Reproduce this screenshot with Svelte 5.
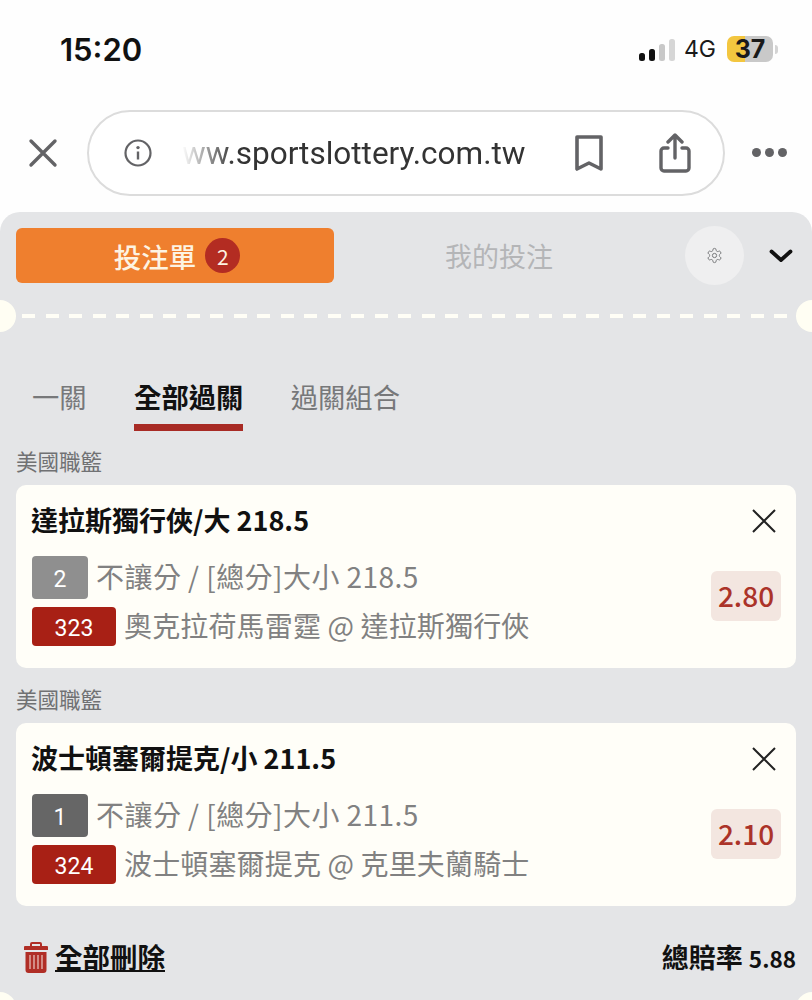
<script>
  const tickets = [
    {
      league: '美國職籃',
      title: '達拉斯獨行俠/大 218.5',
      round: '2',
      roundClass: 'light',
      market: '不讓分 / [總分]大小 218.5',
      code: '323',
      match: '奧克拉荷馬雷霆 @ 達拉斯獨行俠',
      odds: '2.80'
    },
    {
      league: '美國職籃',
      title: '波士頓塞爾提克/小 211.5',
      round: '1',
      roundClass: 'dark',
      market: '不讓分 / [總分]大小 211.5',
      code: '324',
      match: '波士頓塞爾提克 @ 克里夫蘭騎士',
      odds: '2.10'
    }
  ];
  const tabs = ['一關', '全部過關', '過關組合'];
  let activeTab = $state(1);
</script>

<div class="page">
  <div class="status">
    <span class="time">15:20</span>
    <div class="status-right">
      <div class="signal">
        <i class="b1"></i><i class="b2"></i><i class="b3"></i><i class="b4"></i>
      </div>
      <span class="net">4G</span>
      <div class="battery"><span>37</span></div>
      <div class="nub"></div>
    </div>
  </div>

  <div class="browser">
    <svg class="close" width="30" height="30" viewBox="0 0 30 30" fill="none" stroke="#636366" stroke-width="3.4" stroke-linecap="round">
      <path d="M3 3l24 24M27 3L3 27" />
    </svg>
    <div class="pill">
      <svg width="28" height="28" viewBox="0 0 28 28" fill="none">
        <circle cx="14" cy="14" r="12.5" stroke="#636366" stroke-width="2.2" />
        <circle cx="14" cy="8.6" r="1.7" fill="#636366" />
        <path d="M14 12.5v8" stroke="#636366" stroke-width="2.4" />
      </svg>
      <span class="url">ww.sportslottery.com.tw</span>
      <svg class="bookmark" width="30" height="38" viewBox="0 0 30 38" fill="none" stroke="#636366" stroke-width="3.6" stroke-linejoin="round">
        <path d="M3 3h24v32l-12-6-12 6z" />
      </svg>
      <svg class="share" width="32" height="40" viewBox="0 0 32 40" fill="none" stroke="#636366" stroke-width="3.4" stroke-linecap="round" stroke-linejoin="round">
        <path d="M9 15H5a3 3 0 0 0-3 3v17a3 3 0 0 0 3 3h22a3 3 0 0 0 3-3V18a3 3 0 0 0-3-3h-4" />
        <path d="M16 25V3M9 9l7-7 7 7" />
      </svg>
    </div>
    <div class="dots"><i></i><i></i><i></i></div>
  </div>

  <div class="panel">
    <div class="top-row">
      <button class="slip">投注單 <span class="count">2</span></button>
      <div class="mine">我的投注</div>
      <div class="gear">
        <svg width="17" height="17" viewBox="0 0 24 24" fill="none" stroke="#77787a" stroke-width="1.4">
          <path d="M12.22 2h-.44a2 2 0 0 0-2 2v.18a2 2 0 0 1-1 1.73l-.43.25a2 2 0 0 1-2 0l-.15-.08a2 2 0 0 0-2.73.73l-.22.38a2 2 0 0 0 .73 2.73l.15.1a2 2 0 0 1 1 1.72v.51a2 2 0 0 1-1 1.74l-.15.09a2 2 0 0 0-.73 2.73l.22.38a2 2 0 0 0 2.73.73l.15-.08a2 2 0 0 1 2 0l.43.25a2 2 0 0 1 1 1.73V20a2 2 0 0 0 2 2h.44a2 2 0 0 0 2-2v-.18a2 2 0 0 1 1-1.73l.43-.25a2 2 0 0 1 2 0l.15.08a2 2 0 0 0 2.73-.73l.22-.39a2 2 0 0 0-.73-2.73l-.15-.08a2 2 0 0 1-1-1.74v-.5a2 2 0 0 1 1-1.74l.15-.09a2 2 0 0 0 .73-2.73l-.22-.38a2 2 0 0 0-2.73-.73l-.15.08a2 2 0 0 1-2 0l-.43-.25a2 2 0 0 1-1-1.73V4a2 2 0 0 0-2-2z" />
          <circle cx="12" cy="12" r="3" />
        </svg>
      </div>
      <svg class="chevron" width="24" height="14" viewBox="0 0 24 14" fill="none" stroke="#111" stroke-width="3.8" stroke-linecap="round" stroke-linejoin="round">
        <path d="M2.5 2.5L12 11l9.5-8.5" />
      </svg>
    </div>

    <div class="divider">
      <span class="notch left"></span>
      <div class="dash"></div>
      <span class="notch right"></span>
    </div>

    <div class="tabs">
      {#each tabs as t, i}
        <div class="tab" class:active={activeTab === i}>{t}</div>
      {/each}
    </div>

    {#each tickets as t}
      <div class="league">{t.league}</div>
      <div class="card">
        <div class="card-head">
          <div class="title">{t.title}</div>
          <svg class="remove" width="26" height="26" viewBox="0 0 26 26" fill="none" stroke="#222" stroke-width="2">
            <path d="M2 2l22 22M24 2L2 24" />
          </svg>
        </div>
        <div class="card-body">
          <div class="lines">
            <div class="line first">
              <span class="tag round {t.roundClass}">{t.round}</span>
              <span class="txt">{t.market}</span>
            </div>
            <div class="line">
              <span class="tag code">{t.code}</span>
              <span class="txt">{t.match}</span>
            </div>
          </div>
          <div class="odds">{t.odds}</div>
        </div>
      </div>
    {/each}

    <div class="footer">
      <div class="del">
        <svg width="24" height="31" viewBox="0 0 24 31" fill="#b02e26">
          <path d="M8 0h8a2 2 0 0 1 2 2v2h5a1 1 0 0 1 1 1v3H0V5a1 1 0 0 1 1-1h5V2a2 2 0 0 1 2-2zm0 2v2h8V2z" fill-rule="evenodd" />
          <path d="M1.5 10h21v18a3 3 0 0 1-3 3h-15a3 3 0 0 1-3-3z" />
          <path d="M6 13v14M10 13v14M14 13v14M18 13v14" stroke="#eac9c2" stroke-width="1.2" />
        </svg>
        <span>全部刪除</span>
      </div>
      <div class="total">總賠率 <span>5.88</span></div>
    </div>

    <span class="notch bottom-left"></span>
    <span class="notch bottom-right"></span>
  </div>
</div>

<style>
  :global(body) {
    margin: 0;
    background: #fff;
    font-family: "Noto Sans CJK TC", "Noto Sans", sans-serif;
  }
  .page {
    width: 812px;
    height: 1000px;
    overflow: hidden;
    display: flex;
    flex-direction: column;
    background: #fefefe;
  }

  .status {
    height: 98px;
    flex: none;
    display: flex;
    align-items: center;
    justify-content: space-between;
    padding: 0 34px 0 60px;
    box-sizing: border-box;
  }
  .time {
    font-family: Inter, sans-serif;
    font-size: 31px;
    font-weight: 600;
    color: #111;
  }
  .status-right {
    display: flex;
    align-items: center;
  }
  .signal {
    display: flex;
    align-items: flex-end;
    gap: 4px;
    height: 24px;
    margin: 0 9px 0 0;
  }
  .signal i {
    display: block;
    width: 6px;
    border-radius: 2.5px;
    background: #111;
  }
  .signal .b1 { height: 8px; }
  .signal .b2 { height: 12px; }
  .signal .b3 { height: 17px; background: #c8c8c8; }
  .signal .b4 { height: 22px; background: #d6d6d6; }
  .net {
    font-family: Inter, sans-serif;
    font-size: 23px;
    color: #1a1a1a;
    margin-right: 11px;
  }
  .battery {
    width: 46px;
    height: 26px;
    margin-top: -1px;
    border-radius: 7px;
    background: linear-gradient(to right, #f3c63f 0 39%, #c9c9c9 39% 100%);
    display: flex;
    align-items: center;
    justify-content: center;
  }
  .battery span {
    font-family: Inter, sans-serif;
    font-size: 25px;
    font-weight: 700;
    color: #1a1a1a;
  }
  .nub {
    width: 3px;
    height: 9px;
    margin-left: 2px;
    border-radius: 0 3px 3px 0;
    background: #d4d4d4;
  }

  .browser {
    height: 114px;
    flex: none;
    box-sizing: border-box;
    padding-top: 12px;
    display: flex;
    align-items: flex-start;
  }
  .close {
    margin: 28px 0 0 28px;
    flex: none;
  }
  .pill {
    margin-left: 29px;
    width: 638px;
    height: 86px;
    box-sizing: border-box;
    border: 2px solid #dcdcdc;
    border-radius: 43px;
    display: flex;
    align-items: center;
    padding-left: 35px;
    background: #fff;
  }
  .url {
    margin-left: 30px;
    width: 344px;
    flex: none;
    white-space: nowrap;
    font-family: Roboto, sans-serif;
    font-size: 31.5px;
    color: #333;
    -webkit-mask-image: linear-gradient(to right, transparent 0, #000 52px);
    mask-image: linear-gradient(to right, transparent 0, #000 52px);
  }
  .bookmark { margin-left: 48px; flex: none; }
  .share { margin-left: 55px; flex: none; }
  .dots {
    margin: 38px 0 0 27px;
    display: flex;
    gap: 4px;
  }
  .dots i {
    display: block;
    width: 9px;
    height: 9px;
    border-radius: 50%;
    background: #636366;
  }

  .panel {
    flex: 1;
    background: #e4e5e7;
    border-radius: 20px 20px 0 0;
    position: relative;
    overflow: hidden;
  }
  .top-row {
    display: flex;
    align-items: center;
    margin: 16px 0 0 16px;
    height: 55px;
  }
  .slip {
    width: 318px;
    height: 55px;
    flex: none;
    border: 0;
    border-radius: 6px;
    background: #ef7f2e;
    color: #fdf3e2;
    font-family: inherit;
    font-size: 27.5px;
    font-weight: 500;
    display: flex;
    align-items: center;
    justify-content: center;
    gap: 9px;
    padding: 0 0 0 4px;
  }
  .count {
    width: 35px;
    height: 35px;
    border-radius: 50%;
    background: #b32c22;
    color: #fdf3e2;
    font-size: 21px;
    font-weight: 400;
    display: flex;
    align-items: center;
    justify-content: center;
  }
  .mine {
    width: 330px;
    flex: none;
    text-align: center;
    font-size: 27px;
    color: #b4b5b7;
  }
  .gear {
    width: 59px;
    height: 59px;
    margin-left: 21px;
    flex: none;
    border-radius: 50%;
    background: #efeff0;
    display: flex;
    align-items: center;
    justify-content: center;
  }
  .chevron { margin-left: 25px; flex: none; }

  .divider {
    position: relative;
    height: 32px;
    margin-top: 17px;
    display: flex;
    align-items: center;
    padding: 0 22px;
    overflow: hidden;
  }
  .dash {
    flex: 1;
    height: 4px;
    background: repeating-linear-gradient(to right, #fffef6 0 13px, transparent 13px 23.5px);
  }
  .notch {
    position: absolute;
    top: 0;
    width: 32px;
    height: 32px;
    border-radius: 50%;
    background: #fffef3;
  }
  .notch.left { left: -16px; }
  .notch.right { right: -16px; }
  .notch.bottom-left { top: auto; bottom: -24px; left: -16px; }
  .notch.bottom-right { top: auto; bottom: -24px; right: -16px; }

  .tabs {
    display: flex;
    gap: 47.5px;
    margin: 40px 0 0 32px;
  }
  .tab {
    font-size: 27.3px;
    line-height: 48px;
    padding-bottom: 4px;
    border-bottom: 7px solid transparent;
    color: #77787a;
  }
  .tab.active {
    color: #111;
    font-weight: 700;
    border-bottom-color: #a82b25;
  }

  .league {
    margin: 15px 0 9px 16px;
    font-size: 21.5px;
    line-height: 30px;
    color: #707173;
  }
  .card + .league { margin-top: 16px; }
  .card {
    margin: 0 16px;
    height: 183px;
    box-sizing: border-box;
    padding: 0 15px 0 16px;
    background: #fffef8;
    border-radius: 10px;
  }
  .card-head {
    height: 69px;
    margin-bottom: 2px;
    display: flex;
    align-items: center;
    justify-content: space-between;
    padding-right: 4px;
  }
  .remove { margin-top: 2px; }
  .title {
    font-size: 27px;
    font-weight: 700;
    color: #111;
    margin-left: -1px;
  }
  .card-body {
    display: flex;
    align-items: flex-start;
    justify-content: space-between;
  }
  .line {
    display: flex;
    align-items: center;
    gap: 8px;
    height: 39px;
  }
  .line.first {
    height: 43px;
    margin-bottom: 8px;
  }
  .tag {
    height: 100%;
    box-sizing: border-box;
    padding-top: 3px;
    display: flex;
    align-items: center;
    justify-content: center;
    border-radius: 4px;
    color: #fff;
    font-size: 23px;
    font-weight: 400;
    font-family: Roboto, sans-serif;
  }
  .round { width: 56px; }
  .round.light { background: #8f8f8f; }
  .round.dark { background: #666; }
  .code { width: 84px; background: #a82015; }
  .txt {
    font-size: 28px;
    color: #818181;
    letter-spacing: 0.15px;
    white-space: nowrap;
    margin-top: -3px;
  }
  .line.first .txt {
    letter-spacing: 0.45px;
    margin-top: -3px;
  }
  .odds {
    width: 70px;
    height: 50px;
    box-sizing: border-box;
    padding-bottom: 3px;
    margin-top: 15px;
    border-radius: 6px;
    background: #f3e6e0;
    color: #ab3329;
    font-size: 28px;
    font-weight: 500;
    display: flex;
    align-items: center;
    justify-content: center;
  }

  .footer {
    height: 56px;
    margin: 22px 16px 0 24px;
    display: flex;
    align-items: center;
    justify-content: space-between;
  }
  .del {
    display: flex;
    align-items: center;
    gap: 7px;
  }
  .del svg { margin-top: 3px; }
  .del span {
    font-size: 27.5px;
    font-weight: 700;
    color: #111;
    text-decoration: underline;
  }
  .total {
    font-size: 27px;
    font-weight: 700;
    color: #111;
  }
  .total span { font-size: 22.5px; }
</style>
